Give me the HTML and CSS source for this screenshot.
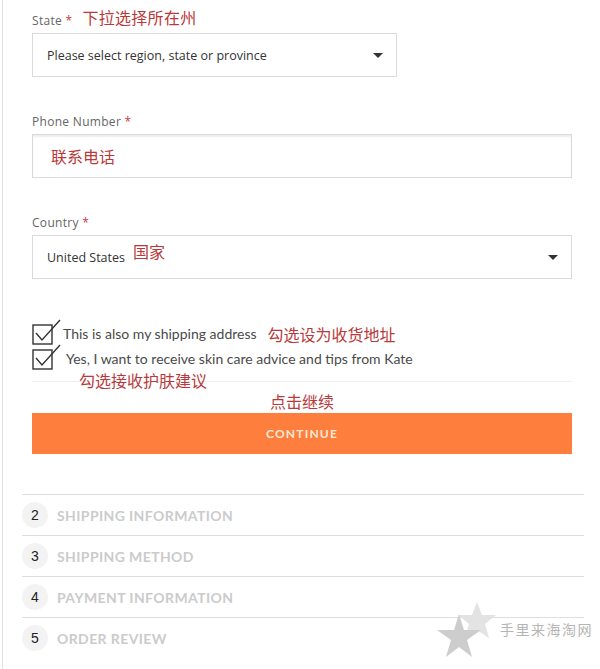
FILE: index.html
```html
<!DOCTYPE html>
<html lang="zh">
<head>
  <meta charset="UTF-8">
  <title>Billing Address</title>
  <link rel="stylesheet" href="styles.css">
</head>
<body>
  <div class="page">
    <form class="form" onsubmit="return false;">
      <div class="field">
        <label class="label">State <span class="req">*</span><span class="note note-label">下拉选择所在州</span></label>
        <div class="box box-short">
          <span class="box-text">Please select region, state or province</span>
          <span class="arrow"></span>
        </div>
      </div>

      <div class="field">
        <label class="label">Phone Number <span class="req">*</span></label>
        <div class="box box-input">
          <span class="note note-input">联系电话</span>
        </div>
      </div>

      <div class="field">
        <label class="label">Country <span class="req">*</span></label>
        <div class="box">
          <span class="box-text">United States</span><span class="note note-raised">国家</span>
          <span class="arrow"></span>
        </div>
      </div>

      <div class="checks">
        <div class="check">
          <svg class="tick" width="30" height="26" viewBox="0 0 30 26">
            <rect x="1" y="6" width="19" height="19" fill="none" stroke="#333" stroke-width="1.4"/>
            <path d="M4 14 L10 21 L28 1" fill="none" stroke="#333" stroke-width="1.4"/>
          </svg>
          <span class="check-text">This is also my shipping address</span>
          <span class="note note-inline">勾选设为收货地址</span>
        </div>
        <div class="check">
          <svg class="tick" width="30" height="26" viewBox="0 0 30 26">
            <rect x="1" y="6" width="19" height="19" fill="none" stroke="#333" stroke-width="1.4"/>
            <path d="M4 14 L10 21 L28 1" fill="none" stroke="#333" stroke-width="1.4"/>
          </svg>
          <span class="check-text check-text-2">Yes, I want to receive skin care advice and tips from Kate</span>
          <span class="note note-under">勾选接收护肤建议</span>
        </div>
      </div>

      <div class="divider"></div>
      <div class="note note-center">点击继续</div>
      <button class="continue" type="submit">CONTINUE</button>
    </form>

    <ul class="steps">
      <li class="step"><span class="num">2</span><span class="step-title">Shipping Information</span></li>
      <li class="step"><span class="num">3</span><span class="step-title">Shipping Method</span></li>
      <li class="step"><span class="num">4</span><span class="step-title">Payment Information</span></li>
      <li class="step"><span class="num">5</span><span class="step-title">Order Review</span></li>
    </ul>

    <div class="mark">
      <svg class="stars" width="60" height="58" viewBox="0 0 60 58">
        <polygon points="40,0 45,13 59,13 48,22 52,36 40,28 28,36 32,22 21,13 35,13" fill="#e3e3e3"/>
        <polygon points="22,12 27,28 44,28 30,38 35,55 22,45 9,55 14,38 0,28 17,28" fill="#cdcdcd"/>
      </svg>
      <span class="mark-text">手里来海淘网</span>
    </div>
  </div>
</body>
</html>
```

FILE: styles.css
```css
body { margin: 0; background: #fff; font-family: "Open Sans", "Noto Sans CJK SC", sans-serif; color: #333; }
.page { position: relative; margin-left: 2px; border-left: 1px solid #e2e2e2; min-height: 669px; overflow: hidden; }
.form { padding: 9px 28px 0 29px; }

.field { margin-bottom: 37px; }
.field:last-of-type { margin-bottom: 0; }
.label { display: block; font-size: 12px; line-height: 16px; color: #666; letter-spacing: 0.3px; margin-bottom: 4px; }
.req { color: #c9393b; }

.box {
  position: relative;
  height: 44px;
  box-sizing: border-box;
  border: 1px solid #dadada;
  display: flex;
  align-items: center;
  padding: 0 14px;
}
.box-short { width: 365px; }
.box-input { box-shadow: inset 0 2px 2px rgba(0,0,0,0.07); }
.box-text { font-size: 12.5px; color: #333; }
.arrow {
  position: absolute;
  right: 13px;
  top: 19px;
  border-left: 5px solid transparent;
  border-right: 5px solid transparent;
  border-top: 5px solid #333;
}

.note { font-family: "Noto Sans CJK SC", sans-serif; color: #b8393a; font-size: 16px; line-height: 18px; }
.note-label { margin-left: 10px; position: relative; top: -1px; }
.note-input { margin-left: 4px; }
.note-raised { margin-left: 8px; position: relative; top: -6px; }

.checks { margin-top: 42px; }
.check { position: relative; display: flex; align-items: center; height: 25px; }
.tick { flex: none; margin-top: -4px; }
.check-text { font-family: "Lato", sans-serif; font-size: 14px; color: #4a4a4a; margin-left: 1px; }
.check-text-2 { margin-left: 4px; }
.note-inline { margin-left: 11px; }
.note-under { position: absolute; left: 47px; top: 25px; }

.divider { margin-top: 10px; border-top: 1px solid #f0f0f0; }
.note-center { text-align: center; margin-top: 10px; margin-bottom: 3px; }

.continue {
  display: block;
  width: 100%;
  height: 41px;
  border: none;
  background: #fe7f3d;
  color: #fde9d6;
  font-family: "Lato", sans-serif;
  font-weight: 700;
  font-size: 12px;
  letter-spacing: 1.2px;
  cursor: pointer;
}

.steps { list-style: none; margin: 40px 16px 0 19px; padding: 0; }
.step { display: flex; align-items: center; height: 40px; border-top: 1px solid #dedede; }
.num {
  width: 26px;
  height: 26px;
  border-radius: 50%;
  background: #f3f3f3;
  display: flex;
  align-items: center;
  justify-content: center;
  font-family: "Liberation Sans", sans-serif;
  font-size: 14px;
  color: #222;
}
.step-title {
  margin-left: 9px;
  font-family: "Lato", sans-serif;
  font-weight: bold;
  font-size: 14px;
  letter-spacing: 0.4px;
  text-transform: uppercase;
  color: #cbcbcb;
}

.mark { position: absolute; left: 434px; top: 602px; display: flex; align-items: center; }
.mark-text { font-family: "Noto Sans CJK SC", serif; font-size: 14px; letter-spacing: 1.5px; color: #b5b5b5; margin-left: 3px; margin-top: -4px; }
```
